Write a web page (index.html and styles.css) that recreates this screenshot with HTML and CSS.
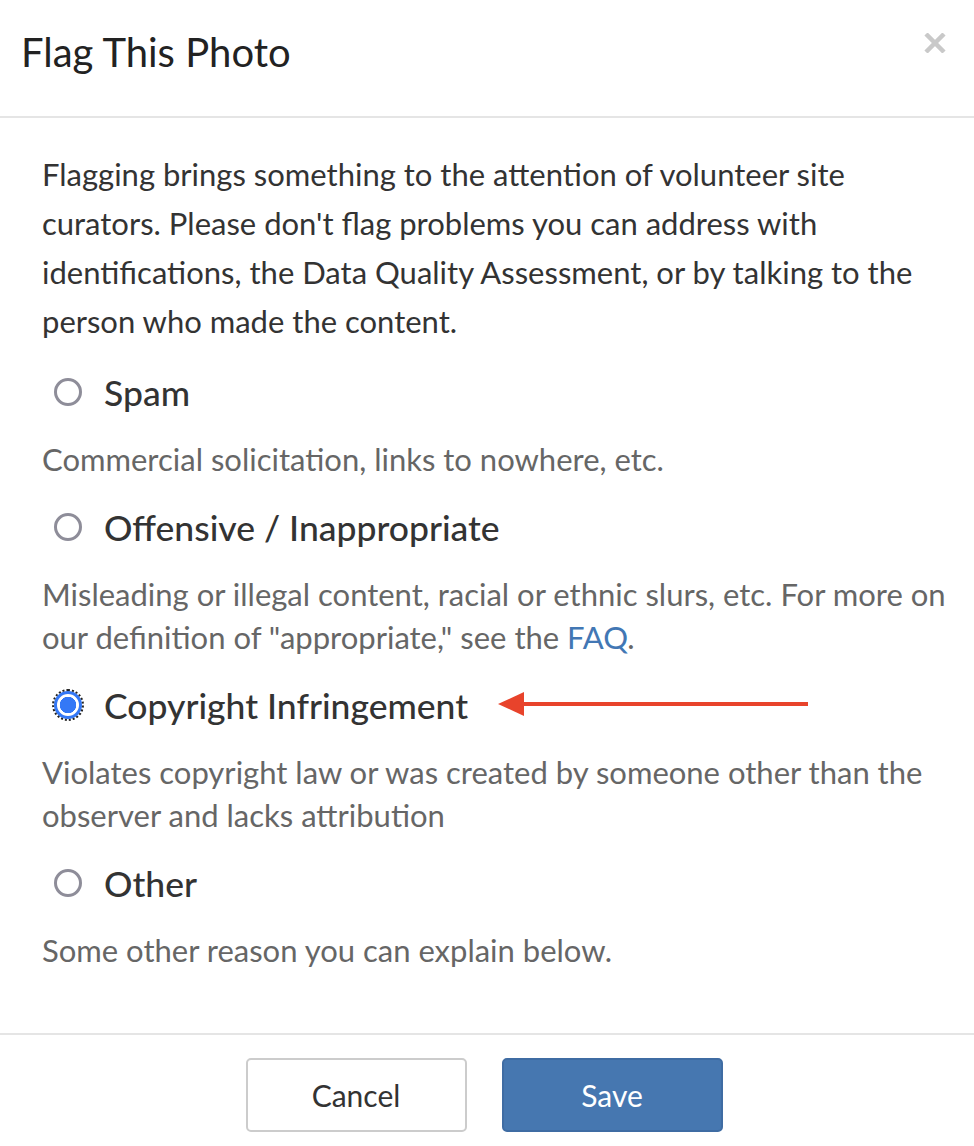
FILE: index.html
```html
<!DOCTYPE html>
<html>
<head>
<meta charset="utf-8">
<link rel="stylesheet" href="styles.css">
</head>
<body>
<div class="modal">
  <div class="modal-header">
    <h1 class="title">Flag This Photo</h1>
    <button class="close" aria-label="Close">
      <svg width="22" height="20" viewBox="0 0 22 20"><path d="M2 1 L20 19 M20 1 L2 19" stroke="#c9c9c9" stroke-width="4.5" fill="none"/></svg>
    </button>
  </div>
  <div class="modal-body">
    <p class="intro">Flagging brings something to the attention of volunteer site curators. Please don't flag problems you can address with identifications, the Data Quality Assessment, or by talking to the person who made the content.</p>
    <div class="option">
      <label class="opt-label"><input type="radio" name="flag" class="radio"><span>Spam</span></label>
      <p class="desc">Commercial solicitation, links to nowhere, etc.</p>
    </div>
    <div class="option">
      <label class="opt-label"><input type="radio" name="flag" class="radio"><span>Offensive / Inappropriate</span></label>
      <p class="desc">Misleading or illegal content, racial or ethnic slurs, etc. For more on our definition of "appropriate," see the <a href="#" class="link">FAQ</a>.</p>
    </div>
    <div class="option">
      <label class="opt-label"><input type="radio" name="flag" class="radio checked" checked><span>Copyright Infringement</span></label>
      <div class="arrow"><svg width="310" height="26" viewBox="0 0 310 26"><path d="M0 13 L26 1 L26 25 Z" fill="#e8432b"/><rect x="24" y="11" width="286" height="4" fill="#e8432b"/></svg></div>
      <p class="desc">Violates copyright law or was created by someone other than the observer and lacks attribution</p>
    </div>
    <div class="option">
      <label class="opt-label"><input type="radio" name="flag" class="radio"><span>Other</span></label>
      <p class="desc">Some other reason you can explain below.</p>
    </div>
  </div>
  <div class="modal-footer">
    <button class="btn btn-default">Cancel</button>
    <button class="btn btn-primary">Save</button>
  </div>
</div>
</body>
</html>
```
FILE: styles.css
```css
html, body {
  margin: 0;
  padding: 0;
  background: #fff;
}
body {
  font-family: Lato, "Open Sans", sans-serif;
  color: #333;
}
.modal {
  width: 974px;
  height: 1146px;
  display: flex;
  flex-direction: column;
}
.modal-header {
  display: flex;
  justify-content: space-between;
  align-items: flex-start;
  padding: 28px 28px 40px 21px;
  border-bottom: 2px solid #e5e5e5;
}
.title {
  margin: 0;
  font-size: 40px;
  line-height: 48px;
  font-weight: 400;
  color: #222;
}
.close {
  border: 0;
  background: none;
  padding: 0;
  margin-top: 5px;
  cursor: pointer;
}
.modal-body {
  padding: 32px 20px 0 42px;
  flex: 1;
}
.intro {
  margin: 0;
  font-size: 31px;
  line-height: 49px;
  color: #333;
}
.option {
  position: relative;
  margin-top: 22px;
}
.opt-label {
  display: flex;
  align-items: center;
  height: 48px;
  gap: 22px;
  font-size: 35.5px;
  font-weight: 500;
  color: #333;
}
.radio {
  appearance: none;
  -webkit-appearance: none;
  margin: 0 0 0 12px;
  width: 28px;
  height: 28px;
  border: 3px solid #8e8d99;
  border-radius: 50%;
  box-sizing: border-box;
  background: #fff;
}
.radio.checked {
  border-color: #3478f6;
  background: radial-gradient(circle, #3478f6 0 8px, #fff 8.5px);
  outline: 2px dotted #222;
  outline-offset: 0;
}
.desc {
  margin: 22px 0 0;
  font-size: 31px;
  line-height: 43px;
  color: #666;
}
.link {
  color: #4277b4;
  text-decoration: none;
}
.arrow {
  position: absolute;
  left: 456px;
  top: 10px;
  line-height: 0;
}
.modal-footer {
  border-top: 2px solid #e5e5e5;
  display: flex;
  justify-content: center;
  gap: 35px;
  padding: 23px 6px 14px 0;
}
.btn {
  width: 221px;
  height: 74px;
  border-radius: 5px;
  font-family: Lato, "Open Sans", sans-serif;
  font-size: 30px;
  cursor: pointer;
}
.btn-default {
  background: #fff;
  border: 2px solid #cccccc;
  color: #333;
}
.btn-primary {
  background: #4677b0;
  border: 2px solid #3f6ca3;
  color: #fff;
}
```
